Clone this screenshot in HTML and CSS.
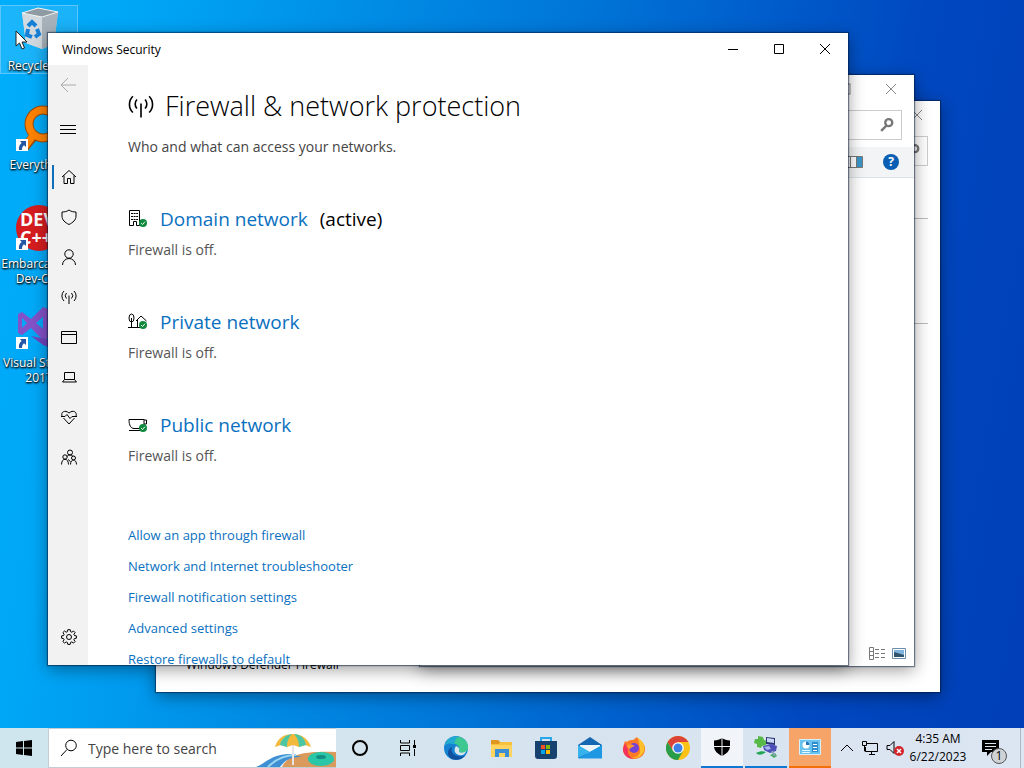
FILE: index.html
```html
<!DOCTYPE html>
<html lang="en">
<head>
    <meta charset="UTF-8">
    <meta name="viewport" content="width=device-width, initial-scale=1.0">
    <title>Windows Security</title>
    <link rel="stylesheet" href="styles.css">
</head>
<body>
    <!-- Shared icons -->
    <svg class="defs" width="0" height="0" aria-hidden="true">
        <symbol id="antenna" viewBox="0 0 16 16">
            <path d="M8 6.500V15M5.500 9.500a4 4 0 0 1 0-5.500M10.500 9.500a4 4 0 0 0 0-5.500M3 12a7 7 0 0 1 0-10M13 12a7 7 0 0 0 0-10"/>
        </symbol>
        <symbol id="close" viewBox="0 0 12 12"><path d="M1 1l10 10M11 1L1 11"/></symbol>
        <symbol id="find" viewBox="0 0 12 12"><circle cx="7.500" cy="4" r="3"/><path d="M5.500 6.500L1 11"/></symbol>
        <symbol id="shortcut" viewBox="0 0 12 12">
            <path fill="#fff" d="M0 0h12v12H0z"/>
            <path fill="#2456a8" d="M4 2h6v6L8 6.300C6.500 7.500 6 9 6 11H3c-.5-3 .5-5.500 2.700-7z"/>
        </symbol>
        <symbol id="check" viewBox="0 0 10 10">
            <circle cx="5" cy="5" r="5" fill="#10893e" stroke="none"/><path d="M2.700 5.200l1.700 1.700 3-3.500" fill="none" stroke="#fff" stroke-width="1.200"/>
        </symbol>
    </svg>

    <main class="desktop">
        <div class="shortcuts">
            <a href="#" class="shortcut selected">
                <svg width="48" height="48" viewBox="0 0 48 48">
                    <path d="M7 7l16-5 20 4-4 32-12 5-16-6z" fill="#c3ccd3"/>
                    <path d="M7 7l20 4v32l-16-6z" fill="#d2dae0"/>
                    <path d="M27 11l16-5-4 32-12 5z" fill="#a7b2ba"/>
                    <path d="M7 7l16-5 20 4-16 5z" fill="#8f9aa2" stroke="#eef2f4"/>
                    <path d="M13 20l4-4 4 4M22 23l2 5-4 3M17 31l-5-2 1-6" fill="none" stroke="#1680d8" stroke-width="4"/>
                </svg>
                <span>Recycle Bin</span>
            </a>
            <a href="#" class="shortcut">
                <svg width="48" height="48" viewBox="0 0 48 48">
                    <path d="M19 31L9 43" stroke="#9c4a00" stroke-width="9"/>
                    <circle cx="28" cy="19" r="14" fill="none" stroke="#9c4a00" stroke-width="9"/>
                    <path d="M20 28L9 43" stroke="#ff8200" stroke-width="7"/>
                    <circle cx="28" cy="19" r="14" fill="none" stroke="#ff8200" stroke-width="7"/>
                    <use href="#shortcut" x="1" y="34" width="12" height="12"/>
                </svg>
                <span>Everything</span>
            </a>
            <a href="#" class="shortcut">
                <svg width="48" height="48" viewBox="0 0 48 48">
                    <circle cx="24" cy="24" r="23" fill="#d51d20"/>
                    <text x="5" y="22" class="logo-text">DEV</text>
                    <text x="5" y="40" class="logo-text">C++</text>
                    <use href="#shortcut" x="1" y="34" width="12" height="12"/>
                </svg>
                <span>Embarcadero Dev-C++</span>
            </a>
            <a href="#" class="shortcut">
                <svg width="48" height="48" viewBox="0 0 48 48">
                    <path d="M3 11l4-2 9 7L28 4l8 3v27l-8 3-12-12-9 7-4-2zM7 15v10l5-5zM28 14l-7 6 7 6z" fill="#8352c8" fill-rule="evenodd"/>
                    <path d="M16 33l20 4 8-4v8l-8 4-8-3z" fill="#6f45bd"/>
                    <use href="#shortcut" x="1" y="34" width="12" height="12"/>
                </svg>
                <span>Visual Studio 2017</span>
            </a>
        </div>

        <!-- Control panel window, at the back -->
        <section class="window control-panel">
            <div class="back-title">
                <button type="button" aria-label="Close"><svg class="line" width="12" height="12"><use href="#close"/></svg></button>
            </div>
            <div class="back-search"><svg class="line thick" width="14" height="14"><use href="#find"/></svg></div>
            <hr>
            <hr>
            <p class="see-also">Windows Defender Firewall</p>
        </section>

        <!-- Explorer window -->
        <section class="window explorer">
            <div class="back-title">
                <button type="button" aria-label="Maximize"><svg class="line" width="12" height="12"><rect x="1" y="1" width="10" height="10"/></svg></button>
                <button type="button" aria-label="Close"><svg class="line" width="12" height="12"><use href="#close"/></svg></button>
            </div>
            <div class="back-search"><svg class="line thick" width="14" height="14"><use href="#find"/></svg></div>
            <div class="command-bar">
                <svg width="18" height="12" viewBox="0 0 18 12"><path d="M.5.500h17v11H.5zM5.500 1v10M11.500 1v10" fill="#fff" stroke="#777"/><path d="M12 1h5v10h-5z" fill="#3a94c8"/></svg>
                <button type="button" class="help" aria-label="Help">?</button>
            </div>
            <div class="view-modes">
                <svg width="17" height="13" viewBox="0 0 17 13"><path d="M.5.500h4v12h-4zM.5 4.500h4M.5 8.500h4M6 2.500h4M12 2.500h4M6 6.500h4M12 6.500h4M6 10.500h4M12 10.500h4" fill="none" stroke="#777"/></svg>
                <svg width="14" height="11" viewBox="0 0 14 11"><path d="M.5.500h13v10H.5z" fill="#fff" stroke="#6a8fae"/><path d="M2 2h10v7H2z" fill="#7fb2dd"/><path d="M2 4l10 3v2H2z" fill="#31536b"/></svg>
            </div>
        </section>

        <section class="window security">
            <header class="title-bar">
                <span>Windows Security</span>
                <div class="window-buttons">
                    <button type="button" aria-label="Minimize"><svg class="line" width="12" height="12"><path d="M1 6.500h10"/></svg></button>
                    <button type="button" aria-label="Maximize"><svg class="line" width="12" height="12"><path d="M1.500 1.500h9v9h-9z"/></svg></button>
                    <button type="button" aria-label="Close"><svg class="line" width="12" height="12"><use href="#close"/></svg></button>
                </div>
            </header>
            <div class="window-body">
                <nav class="side-bar">
                    <button type="button" class="back" aria-label="Back"><svg class="line" width="16" height="16"><path d="M16 8H1M8 1L1 8l7 7"/></svg></button>
                    <button type="button" class="menu" aria-label="Menu"><svg class="line" width="16" height="16"><path d="M0 4.500h16M0 8.500h16M0 12.500h16"/></svg></button>
                    <a href="#" class="current" aria-label="Home"><svg class="line" width="16" height="16"><path d="M1 8l7-6.500L15 8M3 6.500v8h3.500v-5h3v5H13v-8"/></svg></a>
                    <a href="#" aria-label="Virus protection"><svg class="line" width="16" height="16"><path d="M8 1c2 1.500 4.500 2 7 2v4c0 4-3 6.500-7 8.500C4 13.500 1 11 1 7V3c2.500 0 5-.5 7-2z"/></svg></a>
                    <a href="#" aria-label="Account protection"><svg class="line" width="16" height="16"><circle cx="8" cy="5" r="4.200"/><path d="M1.500 16a6.500 6.500 0 0 1 13 0"/></svg></a>
                    <a href="#" aria-label="Firewall"><svg class="line" width="16" height="16"><use href="#antenna"/></svg></a>
                    <a href="#" aria-label="App control"><svg class="line" width="16" height="16"><path d="M.5 2.500h15v12H.5zM.5 5.500h15"/></svg></a>
                    <a href="#" aria-label="Device security"><svg class="line" width="16" height="16"><path d="M3.500 3.500h10v7h-10zM3.500 10.500l-2 2.500h14l-2-2.500"/></svg></a>
                    <a href="#" aria-label="Device health"><svg class="line" width="16" height="16"><path d="M1 7C-.5 3 4 .5 8 4c4-3.500 8.500-1 7 3M2.500 9L8 15l5.500-6M0 7.500h4l2-2 3 4 2-2h5"/></svg></a>
                    <a href="#" aria-label="Family options"><svg class="line" width="16" height="16"><circle cx="9" cy="3.500" r="2.500"/><circle cx="4" cy="8" r="2.200"/><circle cx="12.500" cy="9" r="2"/><path d="M.5 15.500c0-7 7-7 7 0M9.500 15.500c0-6 6-6 6 0M6 7.500C6.500 6.500 7.500 6 9 6s2.500.5 3 1.500M7 10.500l2.500 2"/></svg></a>
                    <a href="#" class="settings" aria-label="Settings"><svg class="line" width="16" height="16"><circle cx="8" cy="8" r="2.500"/><path d="M6.800.7h2.400l.4 2 1.200.5 1.700-1.200 1.600 1.600-1.200 1.700.5 1.200 2 .4v2.300l-2 .4-.5 1.200 1.200 1.700-1.600 1.600-1.700-1.200-1.200.5-.4 2H6.800l-.4-2-1.200-.5-1.700 1.200-1.600-1.600 1.200-1.700-.5-1.200-2-.4V6.900l2-.4.5-1.200-1.200-1.700L3.500 2l1.700 1.200 1.200-.5z"/></svg></a>
                </nav>
                <div class="page">
                    <h1><svg class="line" width="26" height="26"><use href="#antenna"/></svg>Firewall &amp; network protection</h1>
                    <p class="intro">Who and what can access your networks.</p>

                    <section class="network">
                        <h2>
                            <svg class="line dark" width="20" height="20"><path d="M1.500 1.500h10v15h-3v-4h-3v4h-4z"/><path d="M3 4.500h7M3 7.500h7M3 10.500h7" stroke-dasharray="2 .6"/><use href="#check" x="11" y="10" width="8" height="8"/></svg>
                            <a href="#">Domain network</a> <span>(active)</span>
                        </h2>
                        <p>Firewall is off.</p>
                    </section>
                    <section class="network">
                        <h2>
                            <svg class="line dark" width="20" height="20"><ellipse cx="3.500" cy="6" rx="2.500" ry="4"/><path d="M3.500 6v9M0 15.500h12M8 9l5-5 5.500 5M9.500 8v7"/><use href="#check" x="11" y="9" width="8" height="8"/></svg>
                            <a href="#">Private network</a>
                        </h2>
                        <p>Firewall is off.</p>
                    </section>
                    <section class="network">
                        <h2>
                            <svg class="line dark" width="20" height="20"><path d="M1 4.500h15v5c0 3-1 4-4 4H6c-3 0-5-3-5-9M1 15.500h12M16 5h2.500v4H16"/><use href="#check" x="11" y="9" width="8" height="8"/></svg>
                            <a href="#">Public network</a>
                        </h2>
                        <p>Firewall is off.</p>
                    </section>

                    <ul class="links">
                        <li><a href="#">Allow an app through firewall</a></li>
                        <li><a href="#">Network and Internet troubleshooter</a></li>
                        <li><a href="#">Firewall notification settings</a></li>
                        <li><a href="#">Advanced settings</a></li>
                        <li><a href="#">Restore firewalls to default</a></li>
                    </ul>
                </div>
            </div>
        </section>

        <svg class="cursor" width="13" height="20" viewBox="0 0 13 20"><path d="M1 1v15l3.500-3 2.500 6 2.500-1-2.500-6H12z" fill="#fff" stroke="#222"/></svg>
    </main>

    <footer class="taskbar">
        <button type="button" class="start" aria-label="Start"><svg width="16" height="16"><path d="M0 2l7-1v6.500H0zM8 1l8-1v7.500H8zM0 8.500h7V15l-7-1zM8 8.500h8V16l-8-1z"/></svg></button>
        <div class="search">
            <svg class="line" width="18" height="18"><circle cx="11" cy="6.500" r="5.300"/><path d="M7 10.500L1 17"/></svg>
            <input type="text" placeholder="Type here to search" aria-label="Search">
            <svg class="beach" width="80" height="38" viewBox="0 0 80 38">
                <path d="M26 38c6-14 28-16 54-15v15z" fill="#d99a5b"/>
                <path d="M0 38c10-4 16-13 34-13l12 3c-14 0-17 4-22 10z" fill="#3f8fd4"/>
                <path d="M12 38c6-6 14-12 28-12" fill="none" stroke="#9bd6f0" stroke-width="2"/>
                <path d="M37 5v31" stroke="#e9e4e6" stroke-width="2"/>
                <path d="M19 18C22 8 29 5 37 5s15 4 18 13l-6-2-6 2-6-2-6 2-6-2z" fill="#f3b93c"/>
                <path d="M24 16c1-6 6-10 12-11-4 4-5 8-5 13zM43 18c0-6-2-10-5-13 7 0 11 5 12 11z" fill="#4cc7a4"/>
                <ellipse cx="65" cy="30" rx="13" ry="7" fill="#29c6a8"/>
                <ellipse cx="65" cy="28" rx="5" ry="2" fill="#128f82"/>
            </svg>
        </div>
        <div class="apps">
            <button type="button" aria-label="Cortana"><svg width="24" height="24"><circle cx="12" cy="12" r="7" fill="none" stroke="#000" stroke-width="2"/></svg></button>
            <button type="button" aria-label="Task view"><svg class="line dark" width="24" height="24"><path d="M4.500 4v3h9V4M4.500 20v-3h9v3M4.500 9.500h9v5h-9zM18.500 4v5M18.500 13v7"/><path d="M17 9h3v3h-3z" fill="#000" stroke="none"/></svg></button>
            <button type="button" aria-label="Edge">
                <svg width="24" height="24" viewBox="0 0 24 24">
                    <circle cx="12" cy="12" r="12" fill="#1583d2"/>
                    <path d="M1 9C3 2 10-1 16 1c6 2 9 7 8 12-1 4-6 5-9 3 1-3 0-7-4-8C7 7 3 7 1 9z" fill="#3cc890"/>
                    <path d="M1 9C3 2 10-1 15 1c-3 1-5 4-4 7-4-1-8-1-10 1z" fill="#23a9d6"/>
                    <path d="M8 11c-2 6 3 11 13 9-3 3-8 5-13 3-6-3-5-10 0-12z" fill="#114f9f"/>
                    <path d="M12 10c3 1 4 3 3 6 2 1 5 1 7-1-1 4-4 5-7 4-4-1-6-5-3-9z" fill="#d9e6ee"/>
                </svg>
            </button>
            <button type="button" aria-label="File Explorer"><svg width="24" height="24"><path d="M1 4h7l2 2h12v15H1z" fill="#f8c13c"/><path d="M1 4h7l2 2-1 2H1z" fill="#e09620"/><path d="M1 9h21v12H1z" fill="#ffd45e"/><path d="M5 21v-8h14v8h-4v-4H9v4z" fill="#3b8dd6"/></svg></button>
            <button type="button" aria-label="Store"><svg width="24" height="24"><path d="M7 6V2h10v4" fill="none" stroke="#28a8ea" stroke-width="2"/><path d="M1 5h22v15c0 2-1 3-3 3H4c-2 0-3-1-3-3z" fill="#17426f"/><path d="M7 9h4v4H7z" fill="#f25022"/><path d="M12 9h4v4h-4z" fill="#7fba00"/><path d="M7 14h4v4H7z" fill="#00a4ef"/><path d="M12 14h4v4h-4z" fill="#ffb900"/></svg></button>
            <button type="button" aria-label="Mail"><svg width="24" height="24"><path d="M0 9l12-8 12 8v13H0z" fill="#1467b0"/><path d="M2 9h20v4l-10 7L2 13z" fill="#eef5fa"/><path d="M0 9l12 7-12 6z" fill="#36b3ed"/><path d="M24 9L0 22.500h24z" fill="#1e98e2"/></svg></button>
            <button type="button" aria-label="Firefox"><svg width="24" height="24"><path d="M3 5l2 1c2-2 4-2 6-2l4-3c1 3 7 5 8 10 1 7-4 12-11 12C4 23 0 17 1 11z" fill="#ff7a25"/><path d="M16 2c5 3 8 8 6 13-2 6-8 8-13 7 6 0 10-4 9-9z" fill="#ffc02e"/><path d="M1 13c0 6 5 10 11 10-5-2-7-6-6-10L3 7z" fill="#f3325e"/><circle cx="12" cy="12" r="5" fill="#7542d8"/><path d="M5 9c4-2 6 0 8 1-2 1-4 1-5 3-2 0-3-2-3-4z" fill="#ff9a2a"/></svg></button>
            <button type="button" aria-label="Chrome"><svg width="24" height="24"><circle cx="12" cy="12" r="12" fill="#fbc116"/><path d="M1.600 6A12 12 0 0 1 22.400 6H12l-5 9z" fill="#dc4437"/><path d="M1.600 6A12 12 0 0 0 12 24l5-9-10 0z" fill="#2a9d4c"/><circle cx="12" cy="12" r="5.800" fill="#fff"/><circle cx="12" cy="12" r="4.500" fill="#3f7fe8"/></svg></button>
            <button type="button" class="active" aria-label="Windows Security"><svg width="18" height="18"><path d="M9 0c2 1.500 5 2.500 8 2.500V8c0 5-4 8-8 10-4-2-8-5-8-10V2.500C4 2.500 7 1.500 9 0z"/><path d="M9 0v18M1 8.500h16" stroke="#eef2f6"/></svg></button>
            <button type="button" class="open" aria-label="Network tools"><svg width="24" height="24"><path d="M4 1l5 1 1 3 3 1-1 4-4 1-1 2-4-1V9L0 8l1-4 3 0z" fill="#57b947"/><path d="M12 2l9 1v7l-9-1z" fill="#29366f"/><path d="M13 3l7 1v4l-7-1z" fill="#c9d6f5"/><path d="M9 11l8-2 6 2-1 5-6 2-6-3z" fill="#4b51b8"/><path d="M10 12l5-1 2 3-4 1z" fill="#a9b4f0"/><path d="M2 18c4-2 7-2 10-1l-3 2c-3 1-5 1-7-1z" fill="#23a457"/><path d="M16 20l5-2 2 3-3 2z" fill="#3fae5c"/><path d="M18 16l3 5" stroke="#90a0b8" stroke-width="2"/></svg></button>
            <button type="button" class="alert" aria-label="Control Panel"><svg width="22" height="16"><path d="M.5.500h21v15H.5z" fill="#68c4ef" stroke="#d8effa"/><circle cx="7" cy="6" r="3.500" fill="#fff"/><path d="M7 6V2.500A3.500 3.500 0 0 1 10.500 6z" fill="#2374bd"/><path d="M3 11.500h8M3 13.500h8" stroke="#e8f8ff"/><path d="M13 3h6v10h-6z" fill="#318dcb"/><path d="M14 5.500h4M14 8.500h4M14 11.500h4" stroke="#fff"/></svg></button>
        </div>
        <div class="tray">
            <button type="button" aria-label="Show hidden icons"><svg class="line dark" width="14" height="14"><path d="M1 10l6-6 6 6"/></svg></button>
            <button type="button" aria-label="Network"><svg class="line dark" width="18" height="18"><path d="M5 4.500h11.500v8H4.500V8M8 15.500h6M10.500 13v2M1.500 2.500h4v4h-4zM3.500 7v5H5"/></svg></button>
            <button type="button" aria-label="Volume, muted"><svg width="18" height="18"><path d="M1 6.500h3l4-4v12l-4-4H1z" fill="none" stroke="#000"/><circle cx="13" cy="12" r="5" fill="#d3232b"/><path d="M11 10l4 4M15 10l-4 4" stroke="#fff" stroke-width="1.500"/></svg></button>
        </div>
        <button type="button" class="clock"><span>4:35 AM</span><span>6/22/2023</span></button>
        <button type="button" class="notifications" aria-label="Notifications">
            <svg width="18" height="18"><path d="M0 1h17v12H9l-4 4v-4H0z"/><path d="M3 4.500h11M3 7.500h11M3 10.500h7" stroke="#dbe4ee"/></svg>
            <span class="badge">1</span>
        </button>
        <div class="show-desktop"></div>
    </footer>
</body>
</html>
```
FILE: styles.css
```css
* {
    box-sizing: border-box;
}
body {
    margin: 0;
    height: 100vh;
    display: flex;
    flex-direction: column;
    overflow: hidden;
    font-family: "Open Sans", "Noto Sans", sans-serif;
    font-size: 14px;
    color: #000;
    background: linear-gradient(100deg, #00aefb 0%, #00a6f6 12%, #0076d8 50%, #0048c0 80%, #003eb6 100%);
}
button {
    padding: 0;
    border: none;
    background: none;
    font: inherit;
    color: inherit;
}
a {
    color: #0a70c0;
    text-decoration: none;
}
h1, h2, p, ul {
    margin: 0;
    padding: 0;
}
svg {
    display: block;
    flex: none;
}
.defs {
    position: absolute;
}
.line {
    fill: none;
    stroke: currentColor;
}
.thick {
    stroke-width: 2;
}
.dark {
    color: #000;
}

/* Desktop */
.desktop {
    flex: 1;
    min-height: 0;
    position: relative;
}
.shortcuts {
    display: flex;
    flex-direction: column;
    gap: 30px;
    width: 78px;
    padding-top: 5px;
}
.shortcut {
    display: flex;
    flex-direction: column;
    align-items: center;
    gap: 4px;
    height: 69px;
    border: 1px solid transparent;
    color: #fff;
    font-size: 12px;
    line-height: 15px;
    text-align: center;
    text-shadow: 1px 1px 2px #000, 0 1px 2px #000;
}
.selected {
    background: rgba(255, 255, 255, 0.1);
    border-color: rgba(160, 215, 255, 0.5);
}
.logo-text {
    fill: #fff;
    font-size: 18px;
    font-weight: bold;
    text-shadow: none;
}
.cursor {
    position: absolute;
    left: 15px;
    top: 30px;
}

/* Windows */
.window {
    position: absolute;
    display: flex;
    flex-direction: column;
    overflow: hidden;
    background: #fff;
    box-shadow: 0 0 1px 1px rgba(0, 20, 50, 0.5), 0 4px 16px rgba(0, 0, 0, 0.4);
}
.control-panel {
    inset: 101px 84px 36px 156px;
}
.explorer {
    inset: 75px 110px 62px 420px;
}
.security {
    inset: 33px 176px 63px 48px;
}
.back-title {
    display: flex;
    justify-content: flex-end;
    gap: 34px;
    padding: 8px 17px;
    color: #888;
}
.back-search {
    display: flex;
    align-items: center;
    justify-content: flex-end;
    height: 30px;
    margin: 7px 12px 0 80px;
    padding-right: 7px;
    border: 1px solid #ccc;
    color: #777;
}
.control-panel hr {
    width: 700px;
    max-width: 90%;
    margin: 52px 12px 0 auto;
    border: none;
    border-top: 1px solid #bbb;
}
.control-panel hr + hr {
    margin-top: 104px;
}
.see-also {
    margin-top: auto;
    padding: 0 30px 18px;
    font-size: 12px;
    line-height: 18px;
}
.command-bar {
    display: flex;
    align-items: center;
    justify-content: flex-end;
    gap: 20px;
    height: 31px;
    margin-top: 7px;
    padding-right: 15px;
    background: #f3f4f5;
    border-bottom: 1px solid #dde2e6;
}
.help {
    width: 16px;
    height: 16px;
    border-radius: 50%;
    background: #0a5fb4;
    color: #fff;
    font-size: 12px;
    font-weight: bold;
    line-height: 16px;
}
.view-modes {
    display: flex;
    align-items: center;
    justify-content: flex-end;
    gap: 6px;
    margin-top: auto;
    padding: 6px 8px;
}

/* Windows Security */
.title-bar {
    display: flex;
    justify-content: space-between;
    align-items: center;
    height: 32px;
    padding-left: 14px;
    font-size: 12px;
}
.window-buttons {
    display: flex;
    height: 100%;
}
.window-buttons button {
    display: flex;
    align-items: center;
    justify-content: center;
    width: 46px;
}
.window-body {
    flex: 1;
    min-height: 0;
    display: flex;
}
.side-bar {
    display: flex;
    flex-direction: column;
    width: 40px;
    padding-bottom: 8px;
    background: #f2f2f2;
}
.side-bar a, .side-bar button {
    display: flex;
    align-items: center;
    height: 40px;
    padding-left: 13px;
    color: #000;
}
.side-bar .back {
    padding-left: 12px;
    color: #aaa;
}
.side-bar .menu {
    height: 48px;
    margin-bottom: 4px;
    padding-left: 12px;
}
.side-bar .current {
    background: linear-gradient(#0f6fbb, #0f6fbb) 4px center / 2px 24px no-repeat;
}
.side-bar .settings {
    margin-top: auto;
}
.page {
    flex: 1;
    padding: 20px 40px 0;
    overflow: hidden;
}
h1 {
    display: flex;
    align-items: center;
    gap: 11px;
    font-size: 27px;
    font-weight: 300;
    line-height: 42px;
}
.intro {
    margin-top: 10px;
    color: #444;
    line-height: 20px;
}
.network {
    margin-top: 48px;
}
h2 {
    display: flex;
    align-items: center;
    gap: 12px;
    font-size: 19px;
    font-weight: 400;
    line-height: 28px;
}
.network p {
    margin-top: 7px;
    color: #555;
    line-height: 20px;
}
.links {
    margin-top: 54px;
    list-style: none;
    font-size: 13px;
    line-height: 31px;
}

/* Taskbar */
.taskbar {
    display: flex;
    height: 40px;
    background: linear-gradient(90deg, #cfe6ee, #d6e4ef 50%, #dce5f2);
}
.taskbar button {
    display: flex;
    align-items: center;
    justify-content: center;
}
.start {
    width: 48px;
}
.search {
    display: flex;
    align-items: center;
    gap: 10px;
    width: 288px;
    padding-left: 11px;
    border: 1px solid #c3ced4;
    border-right: none;
    background: #fff;
}
.search input {
    flex: 1;
    min-width: 0;
    padding: 0;
    border: none;
    outline: none;
    background: none;
    font: inherit;
}
.search input::placeholder {
    color: #444;
}
.beach {
    align-self: flex-end;
}
.apps {
    display: flex;
}
.apps button {
    width: 44px;
}
.apps button:nth-child(-n+3) {
    width: 48px;
}
.apps .active, .apps .open, .apps .alert {
    width: 42px;
    margin: 0 1px;
    border-bottom: 2px solid #0f78d2;
}
.apps .active {
    background: #f1f4f8;
}
.apps .alert {
    background: #f7a468;
    border-bottom-color: #f2710a;
}
.tray {
    display: flex;
    gap: 7px;
    margin-left: auto;
}
.clock {
    flex-direction: column;
    width: 68px;
    font-size: 12px;
    line-height: 18px;
}
.notifications {
    position: relative;
    width: 48px;
    padding-right: 10px;
}
.badge {
    position: absolute;
    right: 13px;
    bottom: 4px;
    width: 16px;
    height: 16px;
    border: 1px solid #555;
    border-radius: 50%;
    background: #cfd3d6;
    font-size: 12px;
    line-height: 14px;
}
.show-desktop {
    width: 4px;
    border-left: 1px solid #aab8c4;
}
```
